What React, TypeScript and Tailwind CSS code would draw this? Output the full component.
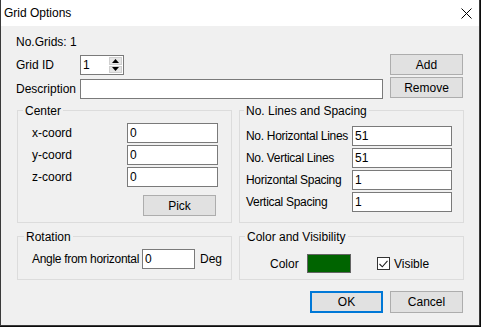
import React from 'react';

const TextBox: React.FC<{ value?: string; className?: string }> = ({ value = '', className = '' }) => (
  <input
    readOnly
    value={value}
    className={`h-[20px] border border-[#7a7a7a] bg-white pl-[2px] text-[12px] leading-[18px] text-black outline-none ${className}`}
  />
);

const Btn: React.FC<{ label: string; primary?: boolean; className?: string }> = ({ label, primary, className = '' }) => (
  <button
    className={`w-[73px] bg-[#e1e1e1] text-[12px] text-black ${
      primary ? 'border-2 border-[#0078d7]' : 'border border-[#adadad]'
    } ${className}`}
  >
    {label}
  </button>
);

const Group: React.FC<{ title: string; titleLeft: string; className: string; children: React.ReactNode }> = ({
  title,
  titleLeft,
  className,
  children,
}) => (
  <div className={`relative border border-[#dcdcdc] ${className}`}>
    <span className={`absolute -top-[7px] ${titleLeft} bg-[#f0f0f0] px-[2px] leading-[14px] whitespace-nowrap`}>
      {title}
    </span>
    {children}
  </div>
);

const App: React.FC = () => {
  return (
    <div className="w-[481px] h-[327px] bg-[#0c0c0c] font-['Liberation_Sans',Arial,sans-serif] text-[12px] text-black">
      <div className="w-[480px] h-[326px] flex flex-col border-x border-b border-[#3a3a3a] bg-[#f0f0f0]">
        {/* title bar */}
        <div className="h-[26px] flex items-center justify-between bg-white pl-[3px] pr-[7px]">
          <span className="text-[12px]">Grid Options</span>
          <svg width="11" height="11" viewBox="0 0 11 11">
            <path d="M0.5 0.5 L10.5 10.5 M10.5 0.5 L0.5 10.5" stroke="#000" strokeWidth="1" fill="none" />
          </svg>
        </div>

        {/* body */}
        <div className="flex-1 flex flex-col pl-[15px] pr-[16px] pt-[9px]">
          <div className="leading-[14px]">No.Grids: 1</div>

          <div className="mt-[5px] flex justify-between">
            <div className="flex flex-col">
              <div className="mt-[1px] h-[20px] flex items-center">
                <span className="w-[64px]">Grid ID</span>
                <div className="w-[44px] h-[20px] flex border border-[#7a7a7a] bg-white">
                  <span className="flex-1 pl-[2px] leading-[18px]">1</span>
                  <div className="w-[15px] flex flex-col gap-[1px] p-[1px]">
                    <div className="flex-1 flex items-center justify-center bg-[#e6e6e6] border border-[#cfcfcf]">
                      <svg width="7" height="4" viewBox="0 0 7 4">
                        <path d="M3.5 0 L7 4 L0 4 Z" fill="#000" />
                      </svg>
                    </div>
                    <div className="flex-1 flex items-center justify-center bg-[#e6e6e6] border border-[#cfcfcf]">
                      <svg width="7" height="4" viewBox="0 0 7 4">
                        <path d="M0 0 L7 0 L3.5 4 Z" fill="#000" />
                      </svg>
                    </div>
                  </div>
                </div>
              </div>
              <div className="mt-[4px] h-[20px] flex items-center">
                <span className="w-[64px]">Description</span>
                <TextBox className="w-[303px]" />
              </div>
            </div>
            <div className="flex flex-col gap-[2px]">
              <Btn label="Add" className="h-[21px]" />
              <Btn label="Remove" className="h-[21px]" />
            </div>
          </div>

          {/* groups row 1 */}
          <div className="mt-[11px] pl-[1px] flex gap-[7px]">
            <Group title="Center" titleLeft="left-[5px]" className="w-[215px] h-[113px] shrink-0">
              <div className="flex flex-col pt-[12px] pl-[14px] pr-[13px]">
                {[
                  ['x-coord', '0'],
                  ['y-coord', '0'],
                  ['z-coord', '0'],
                ].map(([l, v], i) => (
                  <div key={l} className={`h-[20px] flex items-center justify-between ${i ? 'mt-[2px]' : ''}`}>
                    <span>{l}</span>
                    <TextBox value={v} className="w-[91px]" />
                  </div>
                ))}
                <Btn label="Pick" className="h-[21px] self-end mt-[8px] mr-[2px]" />
              </div>
            </Group>
            <Group title="No. Lines and Spacing" titleLeft="left-[4px]" className="w-[225px] h-[113px] shrink-0">
              <div className="flex flex-col gap-[2px] pt-[15px] pl-[6px] pr-[11px]">
                {[
                  ['No. Horizontal Lines', '51'],
                  ['No. Vertical Lines', '51'],
                  ['Horizontal Spacing', '1'],
                  ['Vertical Spacing', '1'],
                ].map(([l, v]) => (
                  <div key={l} className="h-[20px] flex items-center justify-between">
                    <span className="whitespace-nowrap tracking-[-0.3px]">{l}</span>
                    <TextBox value={v} className="w-[100px] shrink-0" />
                  </div>
                ))}
              </div>
            </Group>
          </div>

          {/* groups row 2 */}
          <div className="mt-[13px] pl-[1px] flex gap-[7px]">
            <Group title="Rotation" titleLeft="left-[6px]" className="w-[215px] h-[44px] shrink-0">
              <div className="pt-[12px] pl-[14px] h-[32px] flex items-center">
                <span className="w-[110px] whitespace-nowrap tracking-[-0.3px]">Angle from horizontal</span>
                <TextBox value="0" className="w-[53px]" />
                <span className="ml-[5px]">Deg</span>
              </div>
            </Group>
            <Group title="Color and Visibility" titleLeft="left-[5px]" className="w-[225px] h-[44px] shrink-0">
              <div className="pt-[17px] pl-[30px] flex items-center">
                <span className="w-[37px]">Color</span>
                <div className="w-[44px] h-[19px] border border-[#646464] bg-[#006400]" />
                <div className="ml-[26px] w-[13px] h-[13px] border border-[#333333] bg-white flex items-center justify-center">
                  <svg width="9" height="8" viewBox="0 0 9 8">
                    <path d="M0.5 4 L3.3 6.8 L8.5 0.8" stroke="#222" strokeWidth="1.1" fill="none" />
                  </svg>
                </div>
                <span className="ml-[4px]">Visible</span>
              </div>
            </Group>
          </div>

          <div className="mt-[11px] flex justify-end gap-[7px]">
            <Btn label="OK" primary className="h-[22px]" />
            <Btn label="Cancel" className="h-[22px]" />
          </div>
        </div>
      </div>
    </div>
  );
};

export default App;
